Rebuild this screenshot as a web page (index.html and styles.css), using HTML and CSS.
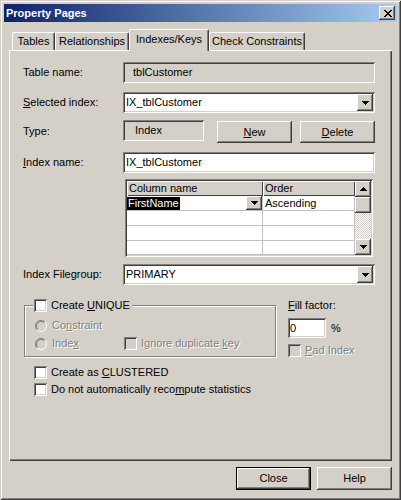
FILE: index.html
```html
<!DOCTYPE html>
<html>
<head>
<meta charset="utf-8">
<title>Property Pages</title>
<link rel="stylesheet" href="styles.css">
</head>
<body>
<div class="win">
  <div class="titlebar">
    <span class="title">Property Pages</span>
    <button class="btn tclose" aria-label="Close">
      <svg width="8" height="7" viewBox="0 0 8 7" shape-rendering="crispEdges"><path fill="#000" d="M0 0h2v1H0zM6 0h2v1H6zM1 1h2v1H1zM5 1h2v1H5zM2 2h4v1H2zM3 3h2v1H3zM2 4h4v1H2zM1 5h2v1H1zM5 5h2v1H5zM0 6h2v1H0zM6 6h2v1H6z"/></svg>
    </button>
  </div>
  <div class="body">
    <div class="tabs">
      <div class="tab t-tables">Tables</div>
      <div class="tab t-rel">Relationships</div>
      <div class="tab t-idx sel">Indexes/Keys</div>
      <div class="tab t-chk">Check Constraints</div>
    </div>
    <div class="panel">
      <div class="row">
        <span class="lbl">Table name:</span>
        <div class="field static wide">tblCustomer</div>
      </div>
      <div class="row r2">
        <span class="lbl"><u>S</u>elected index:</span>
        <div class="field edit wide combo">
          <span>IX_tblCustomer</span>
          <span class="btn ddbtn"><svg width="7" height="4" viewBox="0 0 7 4" shape-rendering="crispEdges"><path d="M0 0h7v1H0zM1 1h5v1H1zM2 2h3v1H2zM3 3h1v1H3z"/></svg></span>
        </div>
      </div>
      <div class="row r3">
        <span class="lbl">Type:</span>
        <div class="field static typebox">Index</div>
        <button class="btn pbtn newbtn"><span><u>N</u>ew</span></button>
        <button class="btn pbtn delbtn"><span><u>D</u>elete</span></button>
      </div>
      <div class="row r4">
        <span class="lbl"><u>I</u>ndex name:</span>
        <div class="field edit wide">IX_tblCustomer</div>
      </div>
      <div class="grid">
        <div class="tbl">
          <div class="hc">Column name</div>
          <div class="hc">Order</div>
          <div class="c c1"><span class="hl">FirstName</span><span class="btn cellbtn"><svg width="7" height="4" viewBox="0 0 7 4" shape-rendering="crispEdges"><path d="M0 0h7v1H0zM1 1h5v1H1zM2 2h3v1H2zM3 3h1v1H3z"/></svg></span></div>
          <div class="c">Ascending</div>
          <div class="c"></div><div class="c"></div>
          <div class="c"></div><div class="c"></div>
          <div class="c"></div><div class="c"></div>
        </div>
        <div class="vscroll">
          <span class="btn sbb"><svg width="7" height="4" viewBox="0 0 7 4" shape-rendering="crispEdges"><path d="M3 0h1v1H3zM2 1h3v1H2zM1 2h5v1H1zM0 3h7v1H0z"/></svg></span>
          <span class="btn sbb thumb"></span>
          <span class="track"></span>
          <span class="btn sbb"><svg width="7" height="4" viewBox="0 0 7 4" shape-rendering="crispEdges"><path d="M0 0h7v1H0zM1 1h5v1H1zM2 2h3v1H2zM3 3h1v1H3z"/></svg></span>
        </div>
      </div>
      <div class="row r6">
        <span class="lbl">Index Filegroup:</span>
        <div class="field edit wide combo">
          <span>PRIMARY</span>
          <span class="btn ddbtn"><svg width="7" height="4" viewBox="0 0 7 4" shape-rendering="crispEdges"><path d="M0 0h7v1H0zM1 1h5v1H1zM2 2h3v1H2zM3 3h1v1H3z"/></svg></span>
        </div>
      </div>
      <div class="lower">
        <fieldset class="group">
          <legend class="gleg"><span class="cbrow"><span class="cb"></span><span>Create <u>U</u>NIQUE</span></span></legend>
          <div class="ginner">
            <div class="cbrow">
              <span class="radio"><svg width="12" height="12" viewBox="0 0 12 12"><circle cx="6" cy="6" r="4.5" fill="#D4D0C8"/><path d="M9.9 2.1A5.5 5.5 0 0 0 2.1 9.9" fill="none" stroke="#808080"/><path d="M2.1 9.9A5.5 5.5 0 0 0 9.9 2.1" fill="none" stroke="#fff"/><path d="M9.2 2.8A4.5 4.5 0 0 0 2.8 9.2" fill="none" stroke="#404040" stroke-opacity=".55"/></svg></span>
              <span class="dis">Co<u>n</u>straint</span>
            </div>
            <div class="cbrow irow">
              <span class="ritem">
                <span class="radio"><svg width="12" height="12" viewBox="0 0 12 12"><circle cx="6" cy="6" r="4.5" fill="#D4D0C8"/><path d="M9.9 2.1A5.5 5.5 0 0 0 2.1 9.9" fill="none" stroke="#808080"/><path d="M2.1 9.9A5.5 5.5 0 0 0 9.9 2.1" fill="none" stroke="#fff"/><path d="M9.2 2.8A4.5 4.5 0 0 0 2.8 9.2" fill="none" stroke="#404040" stroke-opacity=".55"/></svg></span>
                <span class="dis">Inde<u>x</u></span>
              </span>
              <span class="cb off"></span><span class="dis">Ignore duplicate <u>k</u>ey</span>
            </div>
          </div>
        </fieldset>
        <div class="rcol">
          <span class="fl"><u>F</u>ill factor:</span>
          <div class="ffrow">
            <div class="field edit ffedit">0</div>
            <span class="pct">%</span>
          </div>
          <div class="cbrow padrow"><span class="cb off"></span><span class="dis"><u>P</u>ad Index</span></div>
        </div>
      </div>
      <div class="cbrow crow1"><span class="cb"></span><span>Create as <u>C</u>LUSTERED</span></div>
      <div class="cbrow crow2"><span class="cb"></span><span>Do not automatically reco<u>m</u>pute statistics</span></div>
    </div>
    <div class="footer">
      <button class="btn pbtn default">Close</button>
      <button class="btn pbtn">Help</button>
    </div>
  </div>
</div>
</body>
</html>
```

FILE: styles.css
```css
* { box-sizing: border-box; }
html, body { margin: 0; padding: 0; }
body {
  font-family: "Liberation Sans", Arial, sans-serif;
  font-size: 11px;
  line-height: 13px;
  color: #000;
  background: #D4D0C8;
}
u { text-decoration: underline; text-underline-offset: 1px; }

.win {
  width: 401px;
  height: 500px;
  padding: 4px;
  background: #D4D0C8;
  display: flex;
  flex-direction: column;
  box-shadow: inset 1px 1px #D4D0C8, inset -1px -1px #404040, inset 2px 2px #fff, inset -2px -2px #808080;
}

.titlebar {
  height: 18px;
  flex: none;
  display: flex;
  align-items: center;
  justify-content: space-between;
  padding: 0 2px 0 2px;
  background: linear-gradient(to right, #0A246A, #A6CAF0);
  color: #fff;
  font-weight: bold;
}

.btn {
  font: inherit;
  color: #000;
  background: #D4D0C8;
  border: 0;
  padding: 0;
  margin: 0;
  display: flex;
  align-items: center;
  justify-content: center;
  box-shadow: inset -1px -1px #404040, inset 1px 1px #fff, inset -2px -2px #808080, inset 2px 2px #D4D0C8;
}
.btn svg { display: block; }
.tclose { width: 16px; height: 14px; padding-left: 1px; }

.body {
  flex: 1;
  display: flex;
  flex-direction: column;
  padding: 7px 5px 0 5px;
}

.tabs {
  display: flex;
  align-items: flex-end;
  height: 21px;
  flex: none;
  padding-left: 3px;
}
.tab {
  height: 18px;
  display: flex;
  align-items: center;
  justify-content: center;
  background: #D4D0C8;
  border-left: 1px solid #fff;
  border-top: 1px solid #fff;
  border-right: 1px solid #404040;
  box-shadow: inset -1px 0 #808080;
  border-radius: 2px 2px 0 0;
  padding-bottom: 1px;
}
.tab.sel {
  height: 22px;
  margin-bottom: -1px;
  position: relative;
  z-index: 1;
  padding-bottom: 3px;
}
.t-tables { width: 43px; }
.t-rel { width: 74px; }
.t-idx { width: 80px; }
.t-chk { width: 96px; }

.panel {
  height: 411px;
  flex: none;
  padding: 12px 0 0 14px;
  display: flex;
  flex-direction: column;
  box-shadow: inset 1px 1px #fff, inset -1px -1px #404040, inset -2px -2px #808080;
}

.row { display: flex; align-items: center; height: 21px; flex: none; }
.lbl { width: 100px; flex: none; }
.r2 { margin-top: 9px; }
.r3 { margin-top: 7px; height: 23px; align-items: flex-start; }
.r3 .lbl { align-self: center; }
.r4 { margin-top: 9px; }
.r6 { margin-top: 7px; }

.field {
  height: 21px;
  display: flex;
  align-items: center;
  box-shadow: inset 1px 1px #808080, inset -1px -1px #fff, inset 2px 2px #404040, inset -2px -2px #D4D0C8;
}
.edit { background: #fff; padding-left: 3px; }
.static { background: #D4D0C8; padding-left: 10px; }
.wide { width: 252px; }
.combo { padding-right: 2px; }
.combo .ddbtn { margin-left: auto; width: 16px; height: 17px; }
.typebox { width: 81px; padding-left: 12px; }
.pbtn { width: 75px; height: 22px; }
.newbtn { margin-left: 13px; margin-top: 1px; }
.delbtn { margin-left: 8px; margin-top: 1px; }

.grid {
  margin-top: 6px;
  margin-left: 102px;
  width: 248px;
  height: 78px;
  flex: none;
  display: flex;
  padding: 2px;
  background: #fff;
  box-shadow: inset 1px 1px #808080, inset -1px -1px #fff, inset 2px 2px #404040, inset -2px -2px #D4D0C8;
}
.tbl {
  flex: 1;
  display: grid;
  grid-template-columns: 136px 92px;
  grid-template-rows: 15px 15px 15px 15px 14px;
}
.hc {
  background: #D4D0C8;
  box-shadow: inset 1px 1px #fff, inset -1px -1px #404040;
  padding-left: 2px;
  display: flex;
  align-items: center;
}
.c {
  border-right: 1px solid #C0C0C0;
  border-bottom: 1px solid #C0C0C0;
  display: flex;
  align-items: center;
  padding-left: 2px;
  background: #fff;
}
.c1 { padding-left: 0; }
.hl { background: #000; color: #fff; padding: 0 1px 0 1px; line-height: 13px; }
.cellbtn { margin-left: auto; width: 16px; height: 14px; }
.vscroll {
  width: 16px;
  display: flex;
  flex-direction: column;
}
.sbb { width: 16px; height: 16px; flex: none; }
.track {
  flex: 1;
  background: repeating-conic-gradient(#fff 0 25%, #D4D0C8 0 50%) 0 0 / 2px 2px;
}

.lower { display: flex; margin-top: 14px; flex: none; }
.group {
  margin: 0 0 0 1px;
  padding: 0;
  width: 252px;
  min-width: 0;
  border: 1px solid #808080;
  box-shadow: inset 1px 1px #fff, 1px 1px #fff;
}
.gleg {
  margin-left: 8px;
  padding: 0 2px 0 1px;
  background: #D4D0C8;
}
.ginner { padding: 7px 0 6px 10px; }
.cbrow { display: flex; align-items: center; height: 13px; }
.cb {
  width: 13px;
  height: 13px;
  flex: none;
  margin-right: 4px;
  background: #fff;
  box-shadow: inset 1px 1px #808080, inset -1px -1px #fff, inset 2px 2px #404040, inset -2px -2px #D4D0C8;
}
.cb.off { background: #D4D0C8; }
.radio { width: 12px; height: 12px; margin-right: 5px; flex: none; }
.radio svg { display: block; }
.dis { color: #808080; text-shadow: 1px 1px #fff; }
.irow { margin-top: 5px; }
.ritem { width: 89px; display: flex; align-items: center; flex: none; }

.rcol { margin-left: 12px; display: flex; flex-direction: column; }
.fl { height: 13px; }
.ffrow { display: flex; align-items: center; margin-top: 6px; }
.ffedit { width: 38px; height: 20px; padding-left: 2px; }
.pct { margin-left: 5px; }
.padrow { margin-top: 6px; }

.crow1 { margin-top: 9px; margin-left: 11px; }
.crow2 { margin-top: 4px; margin-left: 11px; }

.footer {
  display: flex;
  justify-content: flex-end;
  gap: 6px;
  margin-top: 6px;
}
.footer .pbtn { height: 23px; }
.default {
  box-shadow: inset 0 0 0 1px #000, inset -2px -2px #404040, inset 2px 2px #fff, inset -3px -3px #808080;
}
```
